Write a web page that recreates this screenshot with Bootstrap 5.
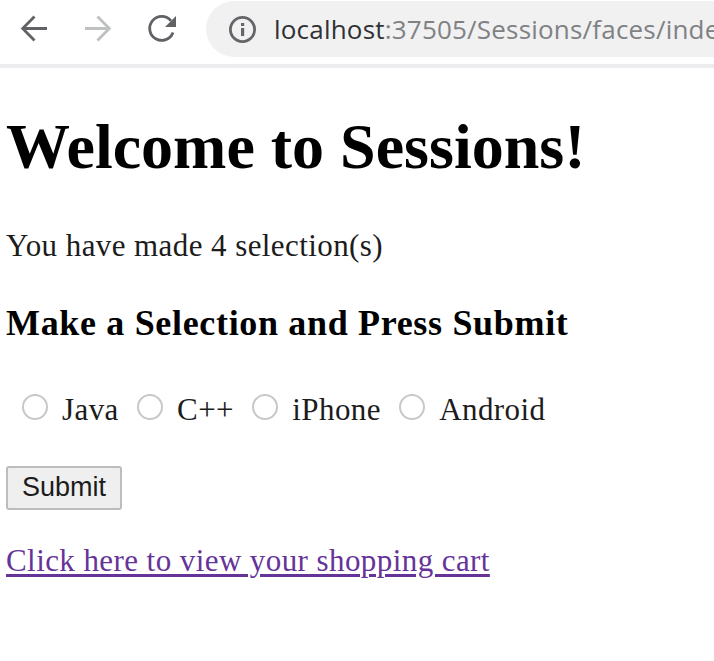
<!DOCTYPE html>
<html lang="en">
<head>
<meta charset="utf-8">
<meta name="viewport" content="width=device-width, initial-scale=1">
<title>Sessions</title>
<link href="https://cdn.jsdelivr.net/npm/bootstrap@5.3.0/dist/css/bootstrap.min.css" rel="stylesheet">
<style>
  body { background: #fff; color: #1c1c1c; font-family: "Liberation Serif", "Times New Roman", serif; font-size: 31px; line-height: 36px; letter-spacing: .42px; }
  .toolbar { height: 68px; border-bottom: 4px solid #ececef; }
  .toolbar svg { display: block; flex: none; }
  .omnibox { height: 56px; margin: 1px 0 0 26px; padding-left: 23px; background: #f1f1f2; border-radius: 28px 0 0 28px; }
  .address { margin-left: 17px; font: 26px/34px "Open Sans", "Noto Sans", sans-serif; letter-spacing: .2px; color: #808184; }
  .address span { color: #303134; }
  main { padding: 42px 0 0 6px; }
  h1, h3 { color: #000; font-weight: 700; margin: 0; }
  h1 { font-size: 64px; line-height: 74px; margin-bottom: 44px; letter-spacing: 0; }
  .count { margin-bottom: 38px; }
  h3 { font-size: 36px; line-height: 42px; margin-bottom: 48px; letter-spacing: .67px; }
  .choices { padding-left: 16px; height: 36px; gap: 18.300px; }
  .choice .form-check-input { width: 26px; height: 26px; margin: 2px 14px 0 0; border: 2px solid #c8c8c8; float: none; }
  .submit { width: 116px; height: 44px; margin-top: 38px; padding: 0 0 2px; background: #efefef; color: #1c1c1c; border: 2px solid #bdbdbd; border-radius: 3px; font: 27px/36px "Liberation Sans", Arial, sans-serif; letter-spacing: 0; }
  .cart { margin-top: 33px; }
  .cart a { color: #663399; text-decoration-thickness: 3px; text-underline-offset: 3px; }
</style>
</head>
<body class="overflow-hidden">
<header class="toolbar d-flex align-items-start overflow-hidden">
  <svg width="180" height="60" viewBox="0 0 180 60" fill="none" stroke-width="2.8">
    <path stroke="#606266" d="M47 28.500H23M34.500 16.500 22.700 28.500l11.800 12"/>
    <path stroke="#bfc0c2" d="M85 28.500h24M97.500 16.500l11.800 12-11.800 12"/>
    <path stroke="#606266" d="M173 32.500A12 12 0 1 1 171 20.800"/>
    <path fill="#606266" d="M176 16v11h-11z"/>
  </svg>
  <div class="omnibox d-flex align-items-center flex-grow-1 overflow-hidden">
    <svg width="28" height="28" viewBox="0 0 28 28"><circle cx="13.500" cy="14.500" r="12.100" fill="none" stroke="#65666a" stroke-width="2.800"/><path fill="#65666a" d="M12 13h3.200v8H12zM12 8h3.200v3H12z"/></svg>
    <div class="address text-nowrap"><span>localhost</span>:37505/Sessions/faces/inde</div>
  </div>
</header>
<main>
  <h1 class="text-nowrap">Welcome to Sessions!</h1>
  <p class="count">You have made 4 selection(s)</p>
  <h3 class="text-nowrap">Make a Selection and Press Submit</h3>
  <form>
    <div class="choices d-flex">
      <label class="choice d-flex"><input class="form-check-input" type="radio" name="item">Java</label>
      <label class="choice d-flex"><input class="form-check-input" type="radio" name="item">C++</label>
      <label class="choice d-flex"><input class="form-check-input" type="radio" name="item">iPhone</label>
      <label class="choice d-flex"><input class="form-check-input" type="radio" name="item">Android</label>
    </div>
    <button class="submit d-block" type="button">Submit</button>
  </form>
  <p class="cart mb-0"><a href="#">Click here to view your shopping cart</a></p>
</main>
<script src="https://cdn.jsdelivr.net/npm/bootstrap@5.3.0/dist/js/bootstrap.bundle.min.js"></script>
</body>
</html>
